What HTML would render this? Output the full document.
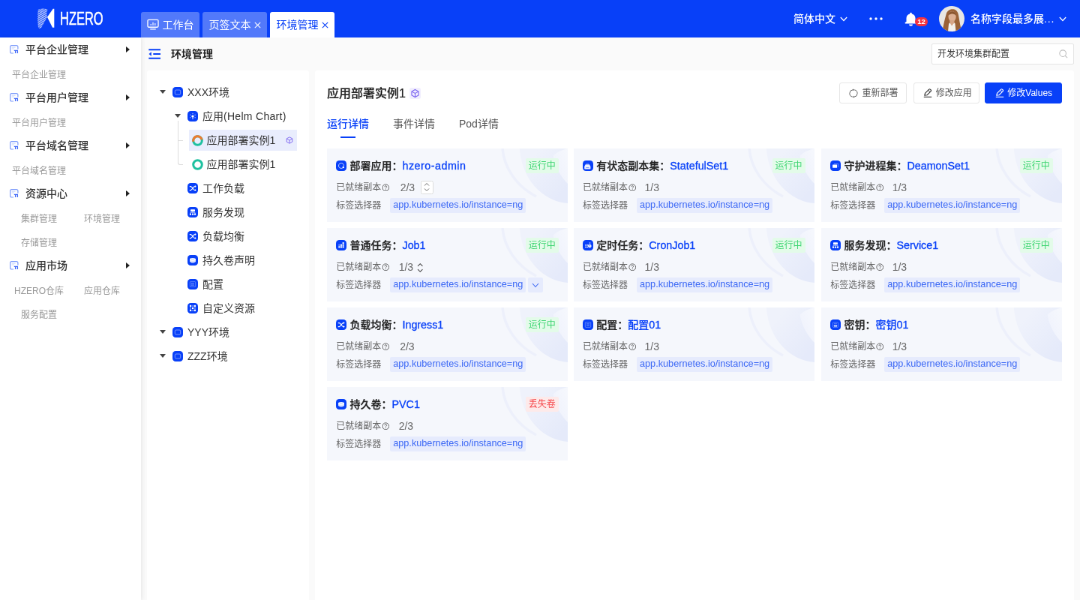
<!DOCTYPE html>
<html lang="zh-CN">
<head>
<meta charset="utf-8">
<title>环境管理</title>
<style>
*{box-sizing:border-box;margin:0;padding:0}
html,body{width:1080px;height:600px;overflow:hidden;background:#fafafa}
body{font-family:"Liberation Sans","Noto Sans CJK SC",sans-serif;color:#333}
#app{position:absolute;left:0;top:0;width:1440px;height:800px;transform:scale(.75);transform-origin:0 0;will-change:transform;font-size:14px;background:#fafafa;overflow:hidden}
.abs{position:absolute}
/* header */
#hdr{position:absolute;left:0;top:0;width:1440px;height:50px;background:#0840f8}
.tab{position:absolute;top:16px;height:34px;border-radius:3px 3px 0 0;background:rgba(255,255,255,.3);color:#fff;font-size:14px;line-height:34px;padding:0 0 0 8.500px;white-space:nowrap}
.tab.on{background:#fff;color:#0840f8}
.tab .x{font-size:12px;margin-left:4px}
.hr{position:absolute;top:0;height:50px;line-height:50px;color:#fff;font-size:14px;font-weight:500;white-space:nowrap}
/* sidebar */
#side{position:absolute;left:0;top:50px;width:188px;height:750px;background:#fff;box-shadow:1px 0 6px rgba(0,0,0,.09)}
.mi{position:absolute;left:0;width:188px;height:32px;line-height:32px;font-size:14px;color:#333;font-weight:500}
.mi .t{position:absolute;left:34px;top:0}
.mi svg.ic{position:absolute;left:13px;top:9.800px}
.mi .ar{position:absolute;left:168px;top:12px;width:0;height:0;border-left:5px solid #222;border-top:4px solid transparent;border-bottom:4px solid transparent}
.si{position:absolute;height:32px;line-height:32px;font-size:12px;color:#999;white-space:nowrap}
/* title bar */
#tbar{position:absolute;left:188px;top:50px;width:1252px;height:44px}
/* tree */
#tree{position:absolute;left:196px;top:94px;width:216px;height:706px;background:#fff;border-radius:3px 3px 0 0}
.tn{position:absolute;height:28px;line-height:28px;font-size:14px;color:#333;white-space:nowrap}
.tic{position:absolute;width:14px;height:14px;border-radius:4px;background:#0840f8}
.car{position:absolute;width:0;height:0;border-top:5.200px solid #444;border-left:4.200px solid transparent;border-right:4.200px solid transparent}
/* main */
#main{position:absolute;left:420px;top:94px;width:1012px;height:706px;background:#fff;border-radius:3px 3px 0 0}
.card{position:absolute;width:320.600px;height:97.800px;background:#f5f7fc;overflow:hidden}
.card .ic{position:absolute;left:12px;top:16px;width:14px;height:14px;border-radius:4px;background:#0840f8}
.card .tt{position:absolute;left:30.300px;top:10px;height:26px;line-height:26px;font-size:14px;font-weight:500;color:#222;-webkit-text-stroke:.25px #222;white-space:nowrap}
.card .tt b{font-weight:500;color:#0840f8;-webkit-text-stroke:.2px #0840f8}
.card .tt .la{font-size:14.300px;-webkit-text-stroke:.3px #0840f8}
.card .st{position:absolute;left:264.500px;top:13px;width:44px;height:19.500px;line-height:20.500px;border-radius:2px;font-size:12px;text-align:center;background:#e3fbe9;color:#3ed572}
.card .st.lost{background:#fdeaea;color:#f5464a}
.card .r2{position:absolute;left:12px;top:42px;height:20px;line-height:20px;font-size:12px;color:#666;white-space:nowrap}
.card .r3{position:absolute;left:12px;top:66px;height:20px;line-height:20px;font-size:12px;color:#666;white-space:nowrap}
.card .num{position:absolute;top:42px;height:20px;line-height:20px;font-size:14px;color:#666}
.card .pill{position:absolute;left:84px;top:66.400px;width:180.500px;height:19.200px;line-height:19.200px;border-radius:2px;background:#e6ebfd;color:#3c68f5;font-size:12.700px;padding-left:4px;white-space:nowrap}
.btn{position:absolute;top:16px;height:28px;line-height:26px;border:1px solid #e6e6e6;border-radius:3px;background:#fff;font-size:12px;color:#555;white-space:nowrap}
.btn.pri{background:#0840f8;border-color:#0840f8;color:#fff}

</style>
</head>
<body>
<div id="app">
<svg width="0" height="0" style="position:absolute"><defs><linearGradient id="dg" x1="0" y1="0" x2="1" y2="1"><stop offset=".2" stop-color="#eff2fb"/><stop offset=".85" stop-color="#e5eafa"/></linearGradient><linearGradient id="dg2" x1="1" y1="0" x2="0" y2="1"><stop offset="0" stop-color="#f6f8fd"/><stop offset="1" stop-color="#eef1fc"/></linearGradient></defs></svg>
<div id="hdr">
<svg class="abs" style="left:50px;top:10px" width="24" height="30" viewBox="0 0 24 30"><defs><pattern id="hz" width="4" height="2.400" patternUnits="userSpaceOnUse" patternTransform="rotate(-32)"><rect width="4" height="1.200" fill="#fff"/></pattern><pattern id="hz2" width="4" height="2.400" patternUnits="userSpaceOnUse" patternTransform="rotate(32)"><rect width="4" height="1" fill="#fff"/></pattern></defs><path d="M.8 3C4 1.200 9 1 13.500 2.500 12 6 12 10 13 12.700L4.500 27.800C3 28 1.500 27.500 1 26.500 0 19 0 10 .8 3z" fill="url(#hz)" opacity=".7"/><path d="M.8 3C4 1.200 9 1 13.500 2.500 12 6 12 10 13 12.700L4.500 27.800C3 28 1.500 27.500 1 26.500 0 19 0 10 .8 3z" fill="url(#hz2)" opacity=".35"/><path d="M13 12.700 20.700 1.700H22.300V26.700H20z" fill="#fff"/></svg>
<div class="abs" style="left:79.500px;top:13.200px;height:24px;line-height:24px;font-size:23px;font-weight:400;color:#fff;-webkit-text-stroke:.5px #fff;transform:scaleX(.715);transform-origin:0 0">HZERO</div>
<div class="tab" style="left:188px;width:78px"><svg class="abs" style="left:8px;top:9.300px" width="16" height="15" viewBox="0 0 17 16" fill="none" stroke="#fff" stroke-width="1.400"><rect x="1" y="1.500" width="15" height="10.500" rx="1.500"/><path d="M4.500 14.800h8" /><path d="M5.500 9.500V7.500M8.500 9.500V5M11.500 9.500V6.500" stroke-width="1.200"/></svg><span style="margin-left:20px">工作台</span></div>
<div class="tab" style="left:270px;width:86px">页签文本<svg class="abs" style="left:69px;top:13px" width="9" height="9" viewBox="0 0 9 9" stroke="#fff" stroke-width="1.100"><path d="M.8.800 8.200 8.200M8.200.8.800 8.200"/></svg></div>
<div class="tab on" style="left:360px;width:86px">环境管理<svg class="abs" style="left:69px;top:13px" width="9" height="9" viewBox="0 0 9 9" stroke="#0840f8" stroke-width="1.100"><path d="M.8.800 8.200 8.200M8.200.8.800 8.200"/></svg></div>
<div class="hr" style="left:1058px">简体中文</div>
<svg class="abs" style="left:1120px;top:22px" width="10" height="7" viewBox="0 0 10 7" fill="none" stroke="#fff" stroke-width="1.200"><path d="M.8 1 5 5.500 9.200 1"/></svg>
<svg class="abs" style="left:1159px;top:23px" width="18" height="4" viewBox="0 0 18 4" fill="#fff"><circle cx="2" cy="2" r="1.700"/><circle cx="9" cy="2" r="1.700"/><circle cx="16" cy="2" r="1.700"/></svg>
<svg class="abs" style="left:1206px;top:15.500px" width="17" height="19" viewBox="0 0 17 19" fill="#fff"><path d="M8.500.8a1.300 1.300 0 0 1 1.300 1.300v.3c2.900.7 4.700 3 4.700 5.800v4.600l.5.800h1.200v1.800H.8v-1.800H2l.5-.8V8.200c0-2.800 1.800-5.100 4.700-5.800v-.3A1.300 1.300 0 0 1 8.500.8z"/><path d="M6 16.400h5a2.500 2.300 0 0 1-5 0z"/></svg>
<div class="abs" style="left:1220px;top:22.900px;width:16.800px;height:11.700px;border-radius:5.900px;background:#f5333f;color:#fff;font-size:9.500px;line-height:11.700px;text-align:center;font-weight:700;letter-spacing:-.2px">12</div>
<svg class="abs" style="left:1251.800px;top:7.900px" width="34" height="34" viewBox="0 0 34 34"><defs><clipPath id="av"><circle cx="17" cy="17" r="17"/></clipPath></defs><g clip-path="url(#av)"><rect width="34" height="34" fill="#e9e7e4"/><path d="M4.500 34C6 24 8.500 15 10 9.500 12 4.500 17 3.500 20.500 4.500 25 6 26 11 26.500 15 27.500 22 29 28 30 34z" fill="#9a6238"/><ellipse cx="17.600" cy="14" rx="5.100" ry="6.900" fill="#ddb094"/><path d="M12.300 12.500C13 8 17 6.500 19.500 7.500 22 8.500 23 11 22.800 13 21 10.500 17 9 12.300 12.500z" fill="#8a5630"/><path d="M14.300 19h6.200v6l-3 3-3.200-3z" fill="#d5a588"/><path d="M10 34c.5-7 2.500-10.500 4.500-11.500l2.500 4 3.500-4c2 1 3.500 5 4 11.500z" fill="#f3f1ee"/><path d="M9 34C9.500 28 8 22 10.500 15L13 24 12 34zM25.500 34C25 28 26 22 24 15.500L21.500 24 22.500 34z" fill="#9a6238"/></g></svg>
<div class="hr" style="left:1294px">名称字段最多展<span style="letter-spacing:.8px">...</span></div>
<svg class="abs" style="left:1411.500px;top:22px" width="10" height="7" viewBox="0 0 10 7" fill="none" stroke="#fff" stroke-width="1.200"><path d="M.8 1 5 5.500 9.200 1"/></svg>
</div>
<div id="side">
<div class="mi" style="top:0px"><svg class="ic" width="12" height="12" viewBox="0 0 12 12" fill="none"><path d="M10.900 5.400V2.400A1.800 1.800 0 0 0 9.100.6H2.400A1.800 1.800 0 0 0 .6 2.400v6.800A1.800 1.800 0 0 0 2.400 11H5" stroke="#7d9bfa" stroke-width="1.200"/><path d="M2.600 3.200h5M2.600 5h3.400" stroke="#7d9bfa" stroke-opacity=".45" stroke-width=".9"/><path d="M5.800 7.300h5.200M7.600 7.300V11M10.400 7.800V11" stroke="#3f68f8" stroke-width="1.300"/></svg><span class="t">平台企业管理</span><i class="ar"></i></div>
<div class="mi" style="top:64px"><svg class="ic" width="12" height="12" viewBox="0 0 12 12" fill="none"><path d="M10.900 5.400V2.400A1.800 1.800 0 0 0 9.100.6H2.400A1.800 1.800 0 0 0 .6 2.400v6.800A1.800 1.800 0 0 0 2.400 11H5" stroke="#7d9bfa" stroke-width="1.200"/><path d="M2.600 3.200h5M2.600 5h3.400" stroke="#7d9bfa" stroke-opacity=".45" stroke-width=".9"/><path d="M5.800 7.300h5.200M7.600 7.300V11M10.400 7.800V11" stroke="#3f68f8" stroke-width="1.300"/></svg><span class="t">平台用户管理</span><i class="ar"></i></div>
<div class="mi" style="top:128px"><svg class="ic" width="12" height="12" viewBox="0 0 12 12" fill="none"><path d="M10.900 5.400V2.400A1.800 1.800 0 0 0 9.100.6H2.400A1.800 1.800 0 0 0 .6 2.400v6.800A1.800 1.800 0 0 0 2.400 11H5" stroke="#7d9bfa" stroke-width="1.200"/><path d="M2.600 3.200h5M2.600 5h3.400" stroke="#7d9bfa" stroke-opacity=".45" stroke-width=".9"/><path d="M5.800 7.300h5.200M7.600 7.300V11M10.400 7.800V11" stroke="#3f68f8" stroke-width="1.300"/></svg><span class="t">平台域名管理</span><i class="ar"></i></div>
<div class="mi" style="top:192px"><svg class="ic" width="12" height="12" viewBox="0 0 12 12" fill="none"><path d="M10.900 5.400V2.400A1.800 1.800 0 0 0 9.100.6H2.400A1.800 1.800 0 0 0 .6 2.400v6.800A1.800 1.800 0 0 0 2.400 11H5" stroke="#7d9bfa" stroke-width="1.200"/><path d="M2.600 3.200h5M2.600 5h3.400" stroke="#7d9bfa" stroke-opacity=".45" stroke-width=".9"/><path d="M5.800 7.300h5.200M7.600 7.300V11M10.400 7.800V11" stroke="#3f68f8" stroke-width="1.300"/></svg><span class="t">资源中心</span><i class="ar"></i></div>
<div class="mi" style="top:288px"><svg class="ic" width="12" height="12" viewBox="0 0 12 12" fill="none"><path d="M10.900 5.400V2.400A1.800 1.800 0 0 0 9.100.6H2.400A1.800 1.800 0 0 0 .6 2.400v6.800A1.800 1.800 0 0 0 2.400 11H5" stroke="#7d9bfa" stroke-width="1.200"/><path d="M2.600 3.200h5M2.600 5h3.400" stroke="#7d9bfa" stroke-opacity=".45" stroke-width=".9"/><path d="M5.800 7.300h5.200M7.600 7.300V11M10.400 7.800V11" stroke="#3f68f8" stroke-width="1.300"/></svg><span class="t">应用市场</span><i class="ar"></i></div>
<div class="si" style="top:33.5px;left:16px">平台企业管理</div>
<div class="si" style="top:97.5px;left:16px">平台用户管理</div>
<div class="si" style="top:161.5px;left:16px">平台域名管理</div>
<div class="si" style="top:225.5px;left:2px;width:100px;text-align:center">集群管理</div>
<div class="si" style="top:225.5px;left:86px;width:100px;text-align:center">环境管理</div>
<div class="si" style="top:257.5px;left:2px;width:100px;text-align:center">存储管理</div>
<div class="si" style="top:321.5px;left:2px;width:100px;text-align:center">HZERO仓库</div>
<div class="si" style="top:321.5px;left:86px;width:100px;text-align:center">应用仓库</div>
<div class="si" style="top:353.5px;left:2px;width:100px;text-align:center">服务配置</div>
</div>
<div id="tbar">
<svg class="abs" style="left:9.800px;top:15px" width="16.500" height="14" viewBox="0 0 16.500 14" fill="none" stroke="#0840f8" stroke-width="1.900"><path d="M.3 1.300h16M6.300 7h10M.3 12.700h16"/><path d="M3.800 4.300 .5 7 3.800 9.700z" fill="#0840f8" stroke="none"/></svg>
<div class="abs" style="left:40px;top:11px;height:22px;line-height:22px;font-size:14px;font-weight:700;color:#222">环境管理</div>
<div class="abs" style="left:1054px;top:8px;width:190px;height:27.500px;background:#fff;border:1px solid #e4e4e4;border-radius:2px;font-size:12px;line-height:27px;padding-left:7px;color:#333">开发环境集群配置</div>
<svg class="abs" style="left:1223.500px;top:15.500px" width="12" height="12" viewBox="0 0 14 14" fill="none" stroke="#bbb" stroke-width="1.250"><circle cx="6" cy="6" r="5"/><path d="M9.700 9.700 13 13"/></svg>
</div>
<div id="tree">
<div class="abs" style="left:56.400000000000006px;top:79.3px;width:143.500px;height:27.400px;background:#e9edfd"></div>
<div class="abs" style="left:40.5px;top:67px;width:7.500px;height:58.5px;border-left:1px solid #dcdcdc;border-bottom:1px solid #dcdcdc;border-bottom-left-radius:3px"></div>
<div class="abs" style="left:40.5px;top:92.5px;width:7.500px;height:1px;background:#dcdcdc"></div>
<i class="car" style="left:16.6px;top:26.4px"></i>
<svg class="abs" style="left:34px;top:22px" width="14" height="14" viewBox="0 0 14 14"><rect width="14" height="14" rx="4.300" fill="#0840f8"/><rect x="3.300" y="4" width="7.400" height="6" rx="1.500" fill="none" stroke="#fff" stroke-opacity=".5" stroke-width=".9"/></svg>
<div class="tn" style="left:54px;top:15px">XXX环境</div>
<i class="car" style="left:16.6px;top:346.4px"></i>
<svg class="abs" style="left:34px;top:342px" width="14" height="14" viewBox="0 0 14 14"><rect width="14" height="14" rx="4.300" fill="#0840f8"/><rect x="3.300" y="4" width="7.400" height="6" rx="1.500" fill="none" stroke="#fff" stroke-opacity=".5" stroke-width=".9"/></svg>
<div class="tn" style="left:54px;top:335px">YYY环境</div>
<i class="car" style="left:16.6px;top:378.4px"></i>
<svg class="abs" style="left:34px;top:374px" width="14" height="14" viewBox="0 0 14 14"><rect width="14" height="14" rx="4.300" fill="#0840f8"/><rect x="3.300" y="4" width="7.400" height="6" rx="1.500" fill="none" stroke="#fff" stroke-opacity=".5" stroke-width=".9"/></svg>
<div class="tn" style="left:54px;top:367px">ZZZ环境</div>
<i class="car" style="left:36.90000000000001px;top:58.4px"></i>
<svg class="abs" style="left:54px;top:54px" width="14" height="14" viewBox="0 0 14 14"><rect width="14" height="14" rx="4.300" fill="#0840f8"/><g fill="#fff" fill-opacity=".6"><circle cx="7" cy="3.400" r=".75"/><circle cx="7" cy="10.600" r=".75"/><circle cx="3.900" cy="5.200" r=".75"/><circle cx="10.100" cy="5.200" r=".75"/><circle cx="3.900" cy="8.800" r=".75"/><circle cx="10.100" cy="8.800" r=".75"/></g><circle cx="7" cy="7" r="1.600" fill="#fff"/><path d="M7 7v3.600" stroke="#fff" stroke-opacity=".8" stroke-width=".9"/></svg>
<div class="tn" style="left:74px;top:47px">应用<span style="letter-spacing:.3px">(Helm Chart)</span></div>
<svg class="abs" style="left:60px;top:85.5px" width="15" height="15" viewBox="0 0 15 15" fill="none" stroke-width="3"><circle cx="7.500" cy="7.500" r="5.800" stroke="#1fc1a0"/><path d="M1.700 7.500A5.800 5.800 0 0 1 13.300 7.500" stroke="#ee7b30" transform="rotate(-12 7.500 7.500)"/></svg>
<div class="tn" style="left:79.60000000000002px;top:79px">应用部署实例1</div>
<svg class="abs" style="left:185px;top:88px" width="10" height="10" viewBox="0 0 10 10"><path d="M5 .8 8.800 2.900v4.200L5 9.200 1.200 7.100V2.900z" fill="none" stroke="#7a62f0" stroke-width=".9"/><path d="M1.400 3 5 5l3.600-2M5 5v4" fill="none" stroke="#7a62f0" stroke-width=".9"/></svg>
<svg class="abs" style="left:60px;top:117.5px" width="15" height="15" viewBox="0 0 15 15" fill="none" stroke-width="3"><circle cx="7.500" cy="7.500" r="5.800" stroke="#1fc1a0"/></svg>
<div class="tn" style="left:79.60000000000002px;top:111px">应用部署实例1</div>
<svg class="abs" style="left:54px;top:150px" width="14" height="14" viewBox="0 0 14 14"><rect width="14" height="14" rx="4.300" fill="#0840f8"/><path d="M2.800 4.500h1.600c2 0 3.200 5 5.200 5h1.200M2.800 9.500h1.600c2 0 3.200-5 5.200-5h1.200" fill="none" stroke="#fff" stroke-width="1.250"/><path d="M9.900 3 11.700 4.500 9.900 6zM9.900 8 11.700 9.500 9.900 11z" fill="#fff"/></svg>
<div class="tn" style="left:74px;top:143px">工作负载</div>
<svg class="abs" style="left:54px;top:182px" width="14" height="14" viewBox="0 0 14 14"><rect width="14" height="14" rx="4.300" fill="#0840f8"/><rect x="4" y="3.300" width="6" height="2.700" rx=".6" fill="#fff"/><path d="M7 6v1.300M4 8.600V7.300h6v1.300" fill="none" stroke="#fff" stroke-opacity=".8" stroke-width=".8"/><rect x="2.900" y="8.500" width="2.200" height="2.200" rx=".4" fill="#fff"/><rect x="5.900" y="8.500" width="2.200" height="2.200" rx=".4" fill="#fff"/><rect x="8.900" y="8.500" width="2.200" height="2.200" rx=".4" fill="#fff"/></svg>
<div class="tn" style="left:74px;top:175px">服务发现</div>
<svg class="abs" style="left:54px;top:214px" width="14" height="14" viewBox="0 0 14 14"><rect width="14" height="14" rx="4.300" fill="#0840f8"/><path d="M2.800 4.500h1.600c2 0 3.200 5 5.200 5h1.200M2.800 9.500h1.600c2 0 3.200-5 5.200-5h1.200" fill="none" stroke="#fff" stroke-width="1.250"/><path d="M9.900 3 11.700 4.500 9.900 6zM9.900 8 11.700 9.500 9.900 11z" fill="#fff"/></svg>
<div class="tn" style="left:74px;top:207px">负载均衡</div>
<svg class="abs" style="left:54px;top:246px" width="14" height="14" viewBox="0 0 14 14"><rect width="14" height="14" rx="4.300" fill="#0840f8"/><path d="M3 6v2.600c0 1 1.800 1.800 4 1.800s4-.8 4-1.800V6z" fill="#fff" fill-opacity=".85"/><ellipse cx="7" cy="5.800" rx="4" ry="1.900" fill="#fff"/><ellipse cx="7" cy="5.800" rx="2.600" ry="1" fill="#0840f8" fill-opacity=".18"/></svg>
<div class="tn" style="left:74px;top:239px">持久卷声明</div>
<svg class="abs" style="left:54px;top:278px" width="14" height="14" viewBox="0 0 14 14"><rect width="14" height="14" rx="4.300" fill="#0840f8"/><g stroke="#fff" stroke-opacity=".4" stroke-width=".8" fill="none"><rect x="3.300" y="3.600" width="7.400" height="6.800" rx=".8"/><path d="M5 5.600h4M5 7h4M5 8.400h4"/></g></svg>
<div class="tn" style="left:74px;top:271px">配置</div>
<svg class="abs" style="left:54px;top:310px" width="14" height="14" viewBox="0 0 14 14"><rect width="14" height="14" rx="4.300" fill="#0840f8"/><path d="M4 4h6v6H4z" fill="none" stroke="#fff" stroke-opacity=".75" stroke-width=".8"/><circle cx="4" cy="4" r="1.150" fill="#fff"/><circle cx="10" cy="4" r="1.150" fill="#fff"/><circle cx="4" cy="10" r="1.150" fill="#fff"/><circle cx="10" cy="10" r="1.150" fill="#fff"/><rect x="5.900" y="5.900" width="2.200" height="2.200" fill="#fff"/></svg>
<div class="tn" style="left:74px;top:303px">自定义资源</div>
</div>
<div id="main">
<div class="abs" style="left:16px;top:19px;height:24px;line-height:24px;font-size:16px;font-weight:500;color:#222;-webkit-text-stroke:.2px #222;white-space:nowrap">应用部署实例1</div>
<svg class="abs" style="left:126px;top:22.500px" width="15" height="15" viewBox="-1.250 -1.250 12.500 12.500"><rect x="-1.250" y="-1.250" width="12.500" height="12.500" rx="2" fill="#f1eefe"/><path d="M5 .8 8.800 2.900v4.200L5 9.200 1.200 7.100V2.900z" fill="none" stroke="#7a62f0" stroke-width=".9"/><path d="M1.400 3 5 5l3.600-2M5 5v4" fill="none" stroke="#7a62f0" stroke-width=".9"/></svg>
<div class="btn" style="left:699px;width:89.500px"><svg class="abs" style="left:12.300px;top:6.500px" width="12" height="13" viewBox="0 0 12 13" fill="none" stroke="#666" stroke-width="1"><path d="M7.200 1.900A4.700 4.700 0 0 1 7 11.200M4.800 11.100A4.700 4.700 0 0 1 5 1.800"/><path d="M5 .4 7.100 1.800 5 3.200zM7 9.800 4.900 11.200 7 12.600z" fill="#666" stroke="none"/></svg><span style="margin-left:29.500px">重新部署</span></div>
<div class="btn" style="left:797.700px;width:88.700px"><svg class="abs" style="left:12px;top:6.500px" width="12" height="12" viewBox="0 0 12 12" fill="none" stroke="#333"><path d="M.8 11.300h10.400" stroke-width="1.100"/><path d="M1.800 9.200 2.500 6.300 7.700 1.100a1.100 1.100 0 0 1 1.600 0l.9.900a1.100 1.100 0 0 1 0 1.600L5 8.800z" stroke-width="1.150" stroke-linejoin="round"/><path d="M6.600 2.300 9 4.700" stroke-width="1"/></svg><span style="margin-left:29px">修改应用</span></div>
<div class="btn pri" style="left:892.800px;width:103.200px"><svg class="abs" style="left:12.800px;top:6.500px" width="12" height="12" viewBox="0 0 12 12" fill="none" stroke="#fff"><path d="M.8 11.300h10.400" stroke-width="1.100"/><path d="M1.800 9.200 2.500 6.300 7.700 1.100a1.100 1.100 0 0 1 1.600 0l.9.900a1.100 1.100 0 0 1 0 1.600L5 8.800z" stroke-width="1.150" stroke-linejoin="round"/><path d="M6.600 2.300 9 4.700" stroke-width="1"/></svg><span style="margin-left:29.500px">修改Values</span></div>
<div class="abs" style="left:16px;top:60px;height:22px;line-height:22px;font-size:14px;font-weight:500;color:#0840f8;white-space:nowrap">运行详情</div>
<div class="abs" style="left:104px;top:60px;height:22px;line-height:22px;font-size:14px;color:#555;white-space:nowrap">事件详情</div>
<div class="abs" style="left:192px;top:60px;height:22px;line-height:22px;font-size:14px;color:#555;white-space:nowrap">Pod详情</div>
<div class="abs" style="left:34px;top:88px;width:20px;height:2px;background:#0840f8"></div>
<div class="card" style="left:16.19999999999999px;top:104.1px"><svg class="abs" style="left:224px;top:0" width="97" height="98" viewBox="0 0 97 98" fill="none"><path d="M32.800 0H97V73C66 71 36 44 32.800 0z" fill="url(#dg)"/><path d="M77.600 9.500C82 5 89 2 97 0V47C88 38 80 25 77.600 9.500z" fill="url(#dg2)"/><path d="M10 0C12 25 28 50 55 64" stroke="#edf0fb" stroke-width="3.500"/></svg><svg class="abs" style="left:12.3px;top:15.6px" width="14" height="14" viewBox="0 0 14 14"><rect width="14" height="14" rx="4.300" fill="#0840f8"/><path d="M9.300 9.600A3.500 3.500 0 1 1 10.500 7" fill="none" stroke="#fff" stroke-opacity=".75" stroke-width="1"/><circle cx="9.800" cy="9" r="1.200" fill="#fff"/></svg><div class="tt">部署应用：<b><span class="la" style="letter-spacing:.5px">hzero-admin</span></b></div><div class="st">运行中</div><div class="r2">已就绪副本<svg width="10.500" height="10.500" viewBox="0 0 10 10" style="vertical-align:-1px;margin-left:.5px" fill="none" stroke="#555" stroke-width=".85"><circle cx="5" cy="5" r="4.200"/><path d="M3.700 4a1.300 1.300 0 1 1 1.900 1.100c-.4.300-.6.500-.6 1"/><path d="M5 7v.8"/></svg></div><div class="num" style="left:97.5px">2/3</div><div class="abs" style="left:124.500px;top:42.800px;width:17.300px;height:18.200px;border:1px solid #dcdcdc;border-radius:2.500px;background:#fff"></div><svg class="abs" style="left:129.100px;top:45.400px" width="8" height="13" viewBox="0 0 8 13" fill="none" stroke="#666" stroke-width="1"><path d="M1 4.500 4 1.500 7 4.500M1 8.500 4 11.500 7 8.500"/></svg><div class="r3">标签选择器</div><div class="pill">app.kubernetes.io/instance=ng</div></div>
<div class="card" style="left:345.0px;top:104.1px"><svg class="abs" style="left:224px;top:0" width="97" height="98" viewBox="0 0 97 98" fill="none"><path d="M32.800 0H97V73C66 71 36 44 32.800 0z" fill="url(#dg)"/><path d="M77.600 9.500C82 5 89 2 97 0V47C88 38 80 25 77.600 9.500z" fill="url(#dg2)"/><path d="M10 0C12 25 28 50 55 64" stroke="#edf0fb" stroke-width="3.500"/></svg><svg class="abs" style="left:12.3px;top:15.6px" width="14" height="14" viewBox="0 0 14 14"><rect width="14" height="14" rx="4.300" fill="#0840f8"/><path d="M2.200 8.100 3.700 5.300h5.200l1.500 2.800v2.700a.8.800 0 0 1-.8.800H3a.8.800 0 0 1-.8-.8z" fill="#fff" fill-opacity=".92"/><path d="M4.400 4h3.800" stroke="#fff" stroke-opacity=".45" stroke-width=".8"/><path d="M4.200 9.500h4.200" stroke="#0840f8" stroke-opacity=".55" stroke-width=".9"/></svg><div class="tt">有状态副本集：<b><span class="la">StatefulSet1</span></b></div><div class="st">运行中</div><div class="r2">已就绪副本<svg width="10.500" height="10.500" viewBox="0 0 10 10" style="vertical-align:-1px;margin-left:.5px" fill="none" stroke="#555" stroke-width=".85"><circle cx="5" cy="5" r="4.200"/><path d="M3.700 4a1.300 1.300 0 1 1 1.900 1.100c-.4.300-.6.500-.6 1"/><path d="M5 7v.8"/></svg></div><div class="num" style="left:94.5px">1/3</div><div class="r3">标签选择器</div><div class="pill">app.kubernetes.io/instance=ng</div></div>
<div class="card" style="left:675.2px;top:104.1px"><svg class="abs" style="left:224px;top:0" width="97" height="98" viewBox="0 0 97 98" fill="none"><path d="M32.800 0H97V73C66 71 36 44 32.800 0z" fill="url(#dg)"/><path d="M77.600 9.500C82 5 89 2 97 0V47C88 38 80 25 77.600 9.500z" fill="url(#dg2)"/><path d="M10 0C12 25 28 50 55 64" stroke="#edf0fb" stroke-width="3.500"/></svg><svg class="abs" style="left:12.3px;top:15.6px" width="14" height="14" viewBox="0 0 14 14"><rect width="14" height="14" rx="4.300" fill="#0840f8"/><rect x="3.100" y="5.600" width="6" height="4.200" rx=".5" fill="#fff"/><path d="M5 4.500h5.600v4.500" fill="none" stroke="#fff" stroke-opacity=".45" stroke-width=".8"/></svg><div class="tt">守护进程集：<b><span class="la">DeamonSet1</span></b></div><div class="st">运行中</div><div class="r2">已就绪副本<svg width="10.500" height="10.500" viewBox="0 0 10 10" style="vertical-align:-1px;margin-left:.5px" fill="none" stroke="#555" stroke-width=".85"><circle cx="5" cy="5" r="4.200"/><path d="M3.700 4a1.300 1.300 0 1 1 1.900 1.100c-.4.300-.6.500-.6 1"/><path d="M5 7v.8"/></svg></div><div class="num" style="left:94.5px">1/3</div><div class="r3">标签选择器</div><div class="pill">app.kubernetes.io/instance=ng</div></div>
<div class="card" style="left:16.19999999999999px;top:210.1px"><svg class="abs" style="left:224px;top:0" width="97" height="98" viewBox="0 0 97 98" fill="none"><path d="M32.800 0H97V73C66 71 36 44 32.800 0z" fill="url(#dg)"/><path d="M77.600 9.500C82 5 89 2 97 0V47C88 38 80 25 77.600 9.500z" fill="url(#dg2)"/><path d="M10 0C12 25 28 50 55 64" stroke="#edf0fb" stroke-width="3.500"/></svg><svg class="abs" style="left:12.3px;top:15.6px" width="14" height="14" viewBox="0 0 14 14"><rect width="14" height="14" rx="4.300" fill="#0840f8"/><g fill="#fff"><rect x="3.300" y="8.300" width="2.100" height="2.100"/><rect x="5.950" y="8.300" width="2.100" height="2.100"/><rect x="8.600" y="8.300" width="2.100" height="2.100"/><rect x="5.950" y="5.700" width="2.100" height="2.100"/><rect x="8.600" y="5.700" width="2.100" height="2.100"/><rect x="8.600" y="3.100" width="2.100" height="2.100"/><rect x="3.300" y="5.700" width="2.100" height="2.100" fill-opacity=".45"/></g></svg><div class="tt">普通任务：<b><span class="la">Job1</span></b></div><div class="st">运行中</div><div class="r2">已就绪副本<svg width="10.500" height="10.500" viewBox="0 0 10 10" style="vertical-align:-1px;margin-left:.5px" fill="none" stroke="#555" stroke-width=".85"><circle cx="5" cy="5" r="4.200"/><path d="M3.700 4a1.300 1.300 0 1 1 1.900 1.100c-.4.300-.6.500-.6 1"/><path d="M5 7v.8"/></svg></div><div class="num" style="left:95.5px">1/3</div><svg class="abs" style="left:119.500px;top:45.500px" width="8.500" height="14" viewBox="0 0 8 13" fill="none" stroke="#444" stroke-width="1"><path d="M1 4.500 4 1.500 7 4.500M1 8.500 4 11.500 7 8.500"/></svg><div class="r3">标签选择器</div><div class="pill">app.kubernetes.io/instance=ng</div><div class="abs" style="left:268px;top:66px;width:20px;height:20px;border-radius:2px;background:#e6ebfd"></div><svg class="abs" style="left:273px;top:73px" width="10" height="7" viewBox="0 0 10 7" fill="none" stroke="#3c68f5" stroke-width="1.100"><path d="M1 1 5 5.500 9 1"/></svg></div>
<div class="card" style="left:345.0px;top:210.1px"><svg class="abs" style="left:224px;top:0" width="97" height="98" viewBox="0 0 97 98" fill="none"><path d="M32.800 0H97V73C66 71 36 44 32.800 0z" fill="url(#dg)"/><path d="M77.600 9.500C82 5 89 2 97 0V47C88 38 80 25 77.600 9.500z" fill="url(#dg2)"/><path d="M10 0C12 25 28 50 55 64" stroke="#edf0fb" stroke-width="3.500"/></svg><svg class="abs" style="left:12.3px;top:15.6px" width="14" height="14" viewBox="0 0 14 14"><rect width="14" height="14" rx="4.300" fill="#0840f8"/><g fill="#fff"><rect x="3" y="6.200" width="1.500" height="1.400" rx=".4"/><rect x="5" y="6.200" width="2.400" height="1.400" rx=".4"/><rect x="3" y="8.700" width="1.500" height="1.400" rx=".4"/><rect x="5" y="8.700" width="2" height="1.400" rx=".4"/><circle cx="9.300" cy="8" r="2.300"/><circle cx="9.600" cy="4" r=".8"/></g><path d="M9.300 6.800V8.100h1" fill="none" stroke="#0840f8" stroke-width=".7"/></svg><div class="tt">定时任务：<b><span class="la">CronJob1</span></b></div><div class="st">运行中</div><div class="r2">已就绪副本<svg width="10.500" height="10.500" viewBox="0 0 10 10" style="vertical-align:-1px;margin-left:.5px" fill="none" stroke="#555" stroke-width=".85"><circle cx="5" cy="5" r="4.200"/><path d="M3.700 4a1.300 1.300 0 1 1 1.900 1.100c-.4.300-.6.500-.6 1"/><path d="M5 7v.8"/></svg></div><div class="num" style="left:94.5px">1/3</div><div class="r3">标签选择器</div><div class="pill">app.kubernetes.io/instance=ng</div></div>
<div class="card" style="left:675.2px;top:210.1px"><svg class="abs" style="left:224px;top:0" width="97" height="98" viewBox="0 0 97 98" fill="none"><path d="M32.800 0H97V73C66 71 36 44 32.800 0z" fill="url(#dg)"/><path d="M77.600 9.500C82 5 89 2 97 0V47C88 38 80 25 77.600 9.500z" fill="url(#dg2)"/><path d="M10 0C12 25 28 50 55 64" stroke="#edf0fb" stroke-width="3.500"/></svg><svg class="abs" style="left:12.3px;top:15.6px" width="14" height="14" viewBox="0 0 14 14"><rect width="14" height="14" rx="4.300" fill="#0840f8"/><rect x="4" y="3.300" width="6" height="2.700" rx=".6" fill="#fff"/><path d="M7 6v1.300M4 8.600V7.300h6v1.300" fill="none" stroke="#fff" stroke-opacity=".8" stroke-width=".8"/><rect x="2.900" y="8.500" width="2.200" height="2.200" rx=".4" fill="#fff"/><rect x="5.900" y="8.500" width="2.200" height="2.200" rx=".4" fill="#fff"/><rect x="8.900" y="8.500" width="2.200" height="2.200" rx=".4" fill="#fff"/></svg><div class="tt">服务发现：<b><span class="la">Service1</span></b></div><div class="st">运行中</div><div class="r2">已就绪副本<svg width="10.500" height="10.500" viewBox="0 0 10 10" style="vertical-align:-1px;margin-left:.5px" fill="none" stroke="#555" stroke-width=".85"><circle cx="5" cy="5" r="4.200"/><path d="M3.700 4a1.300 1.300 0 1 1 1.900 1.100c-.4.300-.6.500-.6 1"/><path d="M5 7v.8"/></svg></div><div class="num" style="left:94.5px">1/3</div><div class="r3">标签选择器</div><div class="pill">app.kubernetes.io/instance=ng</div></div>
<div class="card" style="left:16.19999999999999px;top:316.1px"><svg class="abs" style="left:224px;top:0" width="97" height="98" viewBox="0 0 97 98" fill="none"><path d="M32.800 0H97V73C66 71 36 44 32.800 0z" fill="url(#dg)"/><path d="M77.600 9.500C82 5 89 2 97 0V47C88 38 80 25 77.600 9.500z" fill="url(#dg2)"/><path d="M10 0C12 25 28 50 55 64" stroke="#edf0fb" stroke-width="3.500"/></svg><svg class="abs" style="left:12.3px;top:15.6px" width="14" height="14" viewBox="0 0 14 14"><rect width="14" height="14" rx="4.300" fill="#0840f8"/><path d="M2.800 4.500h1.600c2 0 3.200 5 5.200 5h1.200M2.800 9.500h1.600c2 0 3.200-5 5.200-5h1.200" fill="none" stroke="#fff" stroke-width="1.250"/><path d="M9.900 3 11.700 4.500 9.900 6zM9.900 8 11.700 9.500 9.900 11z" fill="#fff"/></svg><div class="tt">负载均衡：<b><span class="la">Ingress1</span></b></div><div class="st">运行中</div><div class="r2">已就绪副本<svg width="10.500" height="10.500" viewBox="0 0 10 10" style="vertical-align:-1px;margin-left:.5px" fill="none" stroke="#555" stroke-width=".85"><circle cx="5" cy="5" r="4.200"/><path d="M3.700 4a1.300 1.300 0 1 1 1.900 1.100c-.4.300-.6.500-.6 1"/><path d="M5 7v.8"/></svg></div><div class="num" style="left:97px">2/3</div><div class="r3">标签选择器</div><div class="pill">app.kubernetes.io/instance=ng</div></div>
<div class="card" style="left:345.0px;top:316.1px"><svg class="abs" style="left:224px;top:0" width="97" height="98" viewBox="0 0 97 98" fill="none"><path d="M32.800 0H97V73C66 71 36 44 32.800 0z" fill="url(#dg)"/><path d="M77.600 9.500C82 5 89 2 97 0V47C88 38 80 25 77.600 9.500z" fill="url(#dg2)"/><path d="M10 0C12 25 28 50 55 64" stroke="#edf0fb" stroke-width="3.500"/></svg><svg class="abs" style="left:12.3px;top:15.6px" width="14" height="14" viewBox="0 0 14 14"><rect width="14" height="14" rx="4.300" fill="#0840f8"/><g stroke="#fff" stroke-opacity=".4" stroke-width=".8" fill="none"><rect x="3.300" y="3.600" width="7.400" height="6.800" rx=".8"/><path d="M5 5.600h4M5 7h4M5 8.400h4"/></g></svg><div class="tt">配置：<b>配置<span class="la">01</span></b></div><div class="r2">已就绪副本<svg width="10.500" height="10.500" viewBox="0 0 10 10" style="vertical-align:-1px;margin-left:.5px" fill="none" stroke="#555" stroke-width=".85"><circle cx="5" cy="5" r="4.200"/><path d="M3.700 4a1.300 1.300 0 1 1 1.900 1.100c-.4.300-.6.500-.6 1"/><path d="M5 7v.8"/></svg></div><div class="num" style="left:94.5px">1/3</div><div class="r3">标签选择器</div><div class="pill">app.kubernetes.io/instance=ng</div></div>
<div class="card" style="left:675.2px;top:316.1px"><svg class="abs" style="left:224px;top:0" width="97" height="98" viewBox="0 0 97 98" fill="none"><path d="M32.800 0H97V73C66 71 36 44 32.800 0z" fill="url(#dg)"/><path d="M77.600 9.500C82 5 89 2 97 0V47C88 38 80 25 77.600 9.500z" fill="url(#dg2)"/><path d="M10 0C12 25 28 50 55 64" stroke="#edf0fb" stroke-width="3.500"/></svg><svg class="abs" style="left:12.3px;top:15.6px" width="14" height="14" viewBox="0 0 14 14"><rect width="14" height="14" rx="4.300" fill="#0840f8"/><rect x="3.400" y="3.800" width="7.200" height="6.600" rx="1" fill="none" stroke="#fff" stroke-opacity=".4" stroke-width=".8"/><path d="M5 5.600h4" stroke="#fff" stroke-opacity=".4" stroke-width=".8"/><rect x="4.800" y="7.400" width="4.400" height="2" rx=".6" fill="#fff"/><circle cx="6.100" cy="8.400" r=".45" fill="#0840f8"/><circle cx="7.900" cy="8.400" r=".45" fill="#0840f8"/></svg><div class="tt">密钥：<b>密钥<span class="la">01</span></b></div><div class="r2">已就绪副本<svg width="10.500" height="10.500" viewBox="0 0 10 10" style="vertical-align:-1px;margin-left:.5px" fill="none" stroke="#555" stroke-width=".85"><circle cx="5" cy="5" r="4.200"/><path d="M3.700 4a1.300 1.300 0 1 1 1.900 1.100c-.4.300-.6.500-.6 1"/><path d="M5 7v.8"/></svg></div><div class="num" style="left:94.5px">1/3</div><div class="r3">标签选择器</div><div class="pill">app.kubernetes.io/instance=ng</div></div>
<div class="card" style="left:16.19999999999999px;top:422.1px"><svg class="abs" style="left:224px;top:0" width="97" height="98" viewBox="0 0 97 98" fill="none"><path d="M32.800 0H97V73C66 71 36 44 32.800 0z" fill="url(#dg)"/><path d="M77.600 9.500C82 5 89 2 97 0V47C88 38 80 25 77.600 9.500z" fill="url(#dg2)"/><path d="M10 0C12 25 28 50 55 64" stroke="#edf0fb" stroke-width="3.500"/></svg><svg class="abs" style="left:12.3px;top:15.6px" width="14" height="14" viewBox="0 0 14 14"><rect width="14" height="14" rx="4.300" fill="#0840f8"/><path d="M3 6v2.600c0 1 1.800 1.800 4 1.800s4-.8 4-1.800V6z" fill="#fff" fill-opacity=".85"/><ellipse cx="7" cy="5.800" rx="4" ry="1.900" fill="#fff"/><ellipse cx="7" cy="5.800" rx="2.600" ry="1" fill="#0840f8" fill-opacity=".18"/></svg><div class="tt">持久卷：<b><span class="la">PVC1</span></b></div><div class="st lost">丢失卷</div><div class="r2">已就绪副本<svg width="10.500" height="10.500" viewBox="0 0 10 10" style="vertical-align:-1px;margin-left:.5px" fill="none" stroke="#555" stroke-width=".85"><circle cx="5" cy="5" r="4.200"/><path d="M3.700 4a1.300 1.300 0 1 1 1.900 1.100c-.4.300-.6.500-.6 1"/><path d="M5 7v.8"/></svg></div><div class="num" style="left:95.5px">2/3</div><div class="r3">标签选择器</div><div class="pill">app.kubernetes.io/instance=ng</div></div>
</div>
</div>
</body>
</html>
